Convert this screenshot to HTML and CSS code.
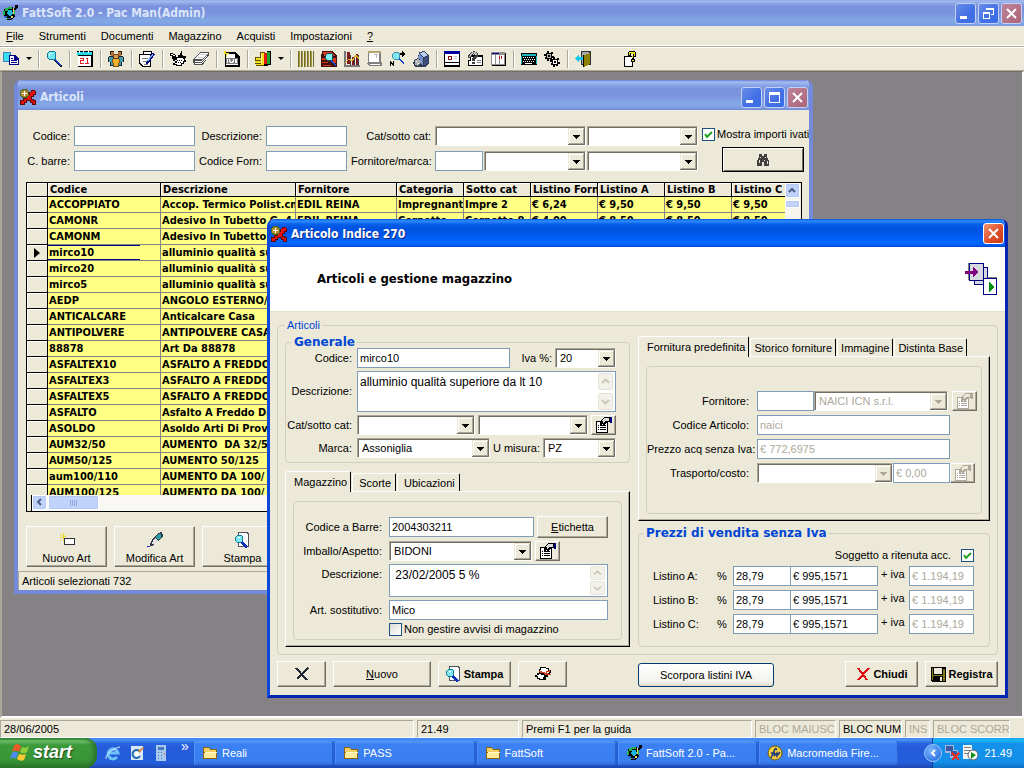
FILE: index.html
```html
<!DOCTYPE html>
<html lang="it">
<head>
    <meta charset="UTF-8">
    <meta name="viewport" content="width=device-width, initial-scale=1.0">
    <title>FattSoft 2.0 - Pac Man(Admin)</title>
    <link rel="stylesheet" href="styles.css">
</head>
<body>

    <!-- Icon set -->
    <svg class="sprite" aria-hidden="true">
        <symbol id="app" viewBox="0 0 16 16">
            <path fill="#000" d="M3 3h3V2h5v1h2V0h3v2l-3 4v5l-3 4H5l-3-3V5z"/>
            <path fill="#1fb24a" d="M3 3h3V2h4v2H6v2H3v4H1V6h2z"/>
            <path fill="#1db7dd" d="M6 5h4l1 3-3 3-3-2z"/>
            <path fill="#1c5fd0" d="M2 11h3v2h4v1H5l-3-2z"/>
            <path fill="#e8d860" d="M11 3h1v6h-1zM9 11h2v2H9z"/>
            <path fill="#1fb24a" d="M12 5h1v5h-1zM4 13h2v1H4z"/>
        </symbol>
        <symbol id="puzzle" viewBox="0 0 16 16">
            <path fill="#5a0808" d="M9 3h2V1h4v1h1v4h-2v2h-2v2h2v1h2v5h-4v-2h-2v-2H7v2H5v2H0v-5h3V9h3V6h3z"/>
            <path fill="#e81010" d="M10 3h2V2h3v3h-2v2h-2v4h2v1h2v3h-2v-2h-2v-2H6v2H4v2H1v-3h3v-2h3V6h3z"/>
            <path fill="#4c6b1e" d="M2 0h5v1h1v1h1v5H8v1H7v1H2V8H1V7H0V2h1V1h1z"/>
            <path fill="#b88a30" d="M3 1h3v1h2v5H6v1H3V7H1V2h2z"/>
            <path fill="#fff" d="M4 2h1v2h2v1H5v2H4V5H2V4h2z"/>
        </symbol>
        <symbol id="copy" viewBox="0 0 16 16">
            <path fill="#4a80c0" d="M0 1h8v10H0z"/><path fill="#38e0f0" d="M1 2h6v8H1z"/>
            <path fill="#000080" d="M6 4h6l4 4v6H6z"/><path fill="#fff" d="M7 5h4v4h4v4H7z"/>
            <path fill="#000080" d="M8 7h2v1H8zM8 9h6v1H8zM8 11h6v1H8z"/>
        </symbol>
        <symbol id="lens" viewBox="0 0 16 16">
            <path fill="#000" d="M9 8l7 6v2h-2L8 9z"/><path fill="#1848d8" d="M9 8l6 6-1 1-6-6z"/>
            <path fill="#107890" d="M3 0h5l2 2v5L8 9H3L1 7V2z"/>
            <path fill="#6fe9f7" d="M3 1h5l1 1v5L8 8H3L2 7V2z"/><path fill="#fff" d="M4 2h2v1H4v2H3V3h1z"/>
        </symbol>
        <symbol id="calendar" viewBox="0 0 16 16">
            <path fill="#000" d="M0 0h16v16H1V4H0z"/><path fill="#fff" d="M1 5h13v10H1z"/>
            <path fill="#20d8e8" d="M0 1h15v3H0z"/><path fill="#fff" d="M2 0h1v2H2zM6 0h1v2H6zM11 0h1v2h-1z"/>
            <path fill="#e02020" d="M3 7h4v3H4v2h3v1H3V9h3V8H3zM9 7h2v5h1v1H8v-1h2V8H9z"/>
        </symbol>
        <symbol id="people" viewBox="0 0 16 16">
            <path fill="#3a2008" d="M2 0h4v4H2zM10 0h4v4h-4z"/>
            <path fill="#b07038" d="M3 1h3v4H3zM10 1h3v4h-3z"/>
            <path fill="#182830" d="M1 5h6v6H6v4H2v-4H0V6h1zM9 5h6v1h1v5h-2v4h-4v-4H9z"/>
            <path fill="#4898b0" d="M1 6h4v5H1zM11 6h4v5h-4zM3 11h2v3H3zM11 11h2v3h-2z"/>
            <path fill="#6b3b10" d="M6 3h4v1h1v3h-1v1H6V7H5V4h1z"/><path fill="#d8a058" d="M6 4h4v3H6z"/>
            <path fill="#805008" d="M4 8h8v4h-1v4H5v-4H4z"/><path fill="#f0b030" d="M5 8h6v4h-1v3H6v-3H5z"/>
        </symbol>
        <symbol id="note" viewBox="0 0 16 16">
            <path fill="#000" d="M4 0h9v3H4zM0 3h12v13H3l-3-3z"/><path fill="#fff" d="M5 1h7v2H5zM1 4h10v11H4l-3-3z"/>
            <path fill="#808080" d="M3 7h6v1H3zM4 10h5v1H4zM5 13h4v1H5z"/>
            <path fill="#000080" d="M13 2l3 1-6 9-3 1 1-3z"/><path fill="#70b0f0" d="M13 3l1 1-5 7-1-1z"/>
        </symbol>
        <symbol id="pen" viewBox="0 0 16 16">
            <path fill="#000" d="M0 2h3v1h2v1h1v2h2V4h2V2h1V0h1v4h1v1h3v2h-1v2h1v2h-2v2h-2v2H6v-1H3v-2h2v-2H3V8H2V5H0z"/>
            <path fill="#fff" d="M1 3h2v1H1zM3 4h2v1H3zM7 7h6v1h1v2h-1v2h-2v2H7v-1H5v-1h2v-2H5V9h2z"/>
            <path fill="#000" d="M7 9h1v1H7zM9 9h1v1H9zM8 11h1v1H8zM10 11h1v1h-1zM11 9h1v1h-1z"/>
        </symbol>
        <symbol id="books" viewBox="0 0 16 16">
            <path fill="#505050" d="M7 1h9v3l-6 10H1l-1-5z"/><path fill="#fff" d="M7 2h8L9 8H2zM2 10h7l5-6v1l-5 6H2zM2 12h7l5-6v1l-5 6H2z"/>
            <path fill="#c8c8c8" d="M7 3h6v1H6zM5 6h5v1H5z"/>
        </symbol>
        <symbol id="iva" viewBox="0 0 16 16">
            <path fill="#000" d="M2 1h9l5 5v10H1V3z"/><path fill="#fff" d="M2 3h9v4h3v7H2z"/>
            <path fill="#808080" d="M2 7h12v6H2z"/><path fill="#e8e020" d="M0 0h2v2h3v1H3v3H2V3H0z"/>
            <path fill="#fff" d="M3 8h1v4H3zM5 8h1v2h1v1h1v-1h1V8h1v3H9v1H6v-1H5zM11 8h2v4h-2z"/>
        </symbol>
        <symbol id="coins" viewBox="0 0 16 16">
            <path fill="#605000" d="M5 1h5v14H1v-2H0V6h5z"/><path fill="#f0e020" d="M6 2h3v12H6zM1 7h5v2H1zM0 10h6v2H0zM1 13h6v1H1z"/>
            <path fill="#fff8a0" d="M6 3h1v9H6z"/><path fill="#e01818" d="M9 2h3v12H9z"/><path fill="#000" d="M12 0h4v14h-4zM9 13h4v2H9z"/>
            <path fill="#18a830" d="M12 1h3v12h-3z"/>
        </symbol>
        <symbol id="barcode" viewBox="0 0 16 16">
            <path fill="#a89a38" d="M0 0h16v16H0z"/><path fill="#6d6a30" d="M0 0h1v16H0zM3 0h1v16H3zM6 0h1v16H6zM9 0h1v16H9zM12 0h1v16h-1zM15 0h1v16h-1z"/>
            <path fill="#ece9d8" d="M2 0h1v16H2zM5 0h1v16H5zM8 0h1v16H8zM11 0h1v16h-1zM14 0h1v16h-1z"/>
        </symbol>
        <symbol id="archive" viewBox="0 0 16 16">
            <path fill="#401008" d="M1 0h11l4 5v11H0V6z"/><path fill="#d83818" d="M2 1h9l3 4H3zM1 7h4v2H1zM1 11h6v1H1zM12 7h3v5h-3zM2 14h8v1H2z"/>
            <path fill="#0c5a70" d="M6 2h4l2 2v4l-2 2H6L4 8V4z"/><path fill="#80f0f8" d="M6 3h4l1 1v4l-1 1H6L5 8V4z"/>
            <path fill="#1848d8" d="M10 9l5 5-1 1-5-5z"/>
        </symbol>
        <symbol id="chart" viewBox="0 0 16 16">
            <path fill="#777" d="M0 0h2v14h14v2H0z"/><path fill="#801820" d="M3 1h3v12H3zM8 6h2v8H8zM12 3h2v11h-2z"/>
            <path fill="#404040" d="M6 4h1v10H6zM10 6h1v8h-1zM14 4h1v10h-1z"/>
            <path fill="none" stroke="#d8b020" stroke-width="1" d="M1 12l4-4 3 2 4-6 3 4"/>
        </symbol>
        <symbol id="scroll" viewBox="0 0 16 16">
            <path fill="#b0a870" d="M1 0h13v2H1z"/><path fill="#808080" d="M1 2h13v9h1v4H2L0 12h1z"/>
            <path fill="#fff" d="M2 2h10v9H2zM3 13h10v1H3z"/><path fill="#c0c0c0" d="M7 3h4v1H7zM9 4h1v3H9z"/>
        </symbol>
        <symbol id="findnum" viewBox="0 0 16 16">
            <path fill="#4090a8" d="M4 1h4l2 2v4L8 9H4L2 7V3z"/><path fill="#80e8f4" d="M4 2h4l1 1v4L8 8H4L3 7V3z"/>
            <path fill="#1840d0" d="M9 7l5 5-1 1-5-5z"/><path fill="#000" d="M10 2h2V0l3 3-3 3V4h-2zM0 10h1l2 3v-3h1v5H3l-2-3v3H0z"/>
        </symbol>
        <symbol id="box3d" viewBox="0 0 16 16">
            <path fill="#303c58" d="M6 1l5-1 5 4v8l-4 4H2l-2-4 2-4 3-1z"/>
            <path fill="#b8d0f4" d="M6 2l5-1 4 3-4 2z"/><path fill="#7090c8" d="M6 3l4 3v8l-3-2V8H5z"/><path fill="#40507c" d="M11 7l4-2v7l-4 3z"/>
            <path fill="#b0b0b0" d="M2 9l3-1 3 3-3 4-3-1z"/><path fill="#fff" d="M3 10h1v1H3zM5 12h1v1H5z"/>
        </symbol>
        <symbol id="window" viewBox="0 0 16 16">
            <path fill="#000" d="M0 0h16v16H0z"/><path fill="#fff" d="M1 3h14v8H1zM1 12h14v2H1z"/><path fill="#0000a0" d="M0 0h16v3H0z"/>
            <path fill="#901010" d="M4 5h4v4H4z"/><path fill="#fff" d="M5 6h2v2H5z"/><path fill="#c0c0c0" d="M10 5h3v1h-3zM10 7h3v1h-3z"/>
        </symbol>
        <symbol id="help2" viewBox="0 0 16 16">
            <path fill="#000" d="M3 4h13v11H1V9h2z"/><path fill="#fff" d="M4 6h11v8H2v-4h2z"/>
            <path fill="#404040" d="M4 1l3-1 4 2v4L8 8v2H5V7l3-3-2-1-2 4H1V4zM5 11h3v2H5z"/>
            <path fill="#c0c0c0" d="M5 1h3l2 2-3 4H6l3-3-3-2-3 4H2z"/><path fill="#808080" d="M10 9h4v1h-4zM10 11h4v1h-4z"/>
        </symbol>
        <symbol id="columns" viewBox="0 0 16 16">
            <path fill="#000" d="M15 2h1v13H2v-1h13z"/><path fill="#909090" d="M1 1h14v13H1z"/><path fill="#fff" d="M2 4h3v9H2zM6 4h3v9H6zM10 4h4v9h-4z"/>
            <path fill="#000080" d="M2 2h7v1H2z"/><path fill="#b01818" d="M9 5h1v3H9zM11 5h1v3h-1z"/>
        </symbol>
        <symbol id="keyboard" viewBox="0 0 16 16">
            <path fill="#000" d="M0 2h16v12H0z"/><path fill="#20b8c0" d="M1 3h14v2H1zM0 5h1v8H0zM15 5h1v8h-1z"/>
            <path fill="#fff" d="M2 6h1v1H2zM4 6h1v1H4zM6 6h1v1H6zM8 6h1v1H8zM10 6h1v1h-1zM12 6h1v1h-1zM3 8h1v1H3zM5 8h1v1H5zM7 8h1v1H7zM9 8h1v1H9zM11 8h1v1h-1zM13 8h1v1h-1zM2 10h1v1H2zM4 10h1v1H4zM6 10h1v1H6zM8 10h1v1H8zM10 10h1v1h-1zM12 10h1v1h-1zM4 12h7v1H4z"/>
        </symbol>
        <symbol id="gears" viewBox="0 0 16 16">
            <path fill="#000" d="M3 0h2v2h2V1h2v2H8v2h2v2H8v2H6V8H5v2H3V8H1V6h1V5H0V3h2V2h1z"/><path fill="#b0b0b0" d="M3 3h4v4H3z"/><path fill="#000" d="M4 4h2v2H4z"/>
            <path fill="#000" d="M9 6h2v2h2V7h2v2h-1v2h2v2h-2v2h-2v-1h-1v2H9v-2H7v-2h1v-1H6V9h2V8h1z"/><path fill="#fff" d="M9 9h4v4H9z"/><path fill="#000" d="M10 10h2v2h-2z"/>
        </symbol>
        <symbol id="door" viewBox="0 0 16 16">
            <path fill="#303030" d="M6 0h10v14H6z"/><path fill="#a8a8a8" d="M7 1h7v12H7z"/><path fill="#908000" d="M9 4l6-2v11l-6 3z"/>
            <path fill="#10c8e8" d="M0 7l4-4v3h5v3H4v3z"/><path fill="#000" d="M8 4h1v12H8z"/>
        </symbol>
        <symbol id="question" viewBox="0 0 16 16">
            <path fill="#000" d="M1 5h9v11H1z"/><path fill="#fff" d="M2 6h7v9H2z"/><path fill="#000" d="M6 0h6v1h1v5h-2v2h1v3H8V8h1V5h1V3H8v2H5V1h1z"/>
            <path fill="#f0e818" d="M6 1h6v4h-2v2H9V5h2V3H8V2H7v2H6zM9 9h2v1H9z"/>
        </symbol>
        <symbol id="binoculars" viewBox="0 0 16 16">
            <path fill="#404040" d="M4 2h3v2h2V2h3v3l2 4v5H9v-4H7v4H2V9l2-4z"/>
            <path fill="#ece9d8" d="M5 5h1v1H5zM10 5h1v1h-1zM4 8h1v3H4zM9 8h1v1H9zM12 9h1v3h-1z"/>
        </symbol>
        <symbol id="newitem" viewBox="0 0 16 16">
            <path fill="#e8d820" d="M4 1h1v3h2V3h1v1H7v1H5v4H4V6H1V5h3zM1 2h1v1H1zM2 3h1v1H2zM1 8h1v1H1z"/>
            <path fill="#303040" d="M5 6h11v7H5z"/><path fill="#fff" d="M6 7h9v5H6z"/>
        </symbol>
        <symbol id="edit" viewBox="0 0 16 16">
            <path fill="#303848" d="M5 8l6-7 4-1 1 4-5 5-6 5H3v-2z"/><path fill="#28a0a0" d="M11 2h3v3l-3 3-3-3z"/>
            <path fill="#e0e0e0" d="M6 8l2-2 3 3-4 3H5z"/><path fill="#1030b8" d="M0 14h3v1H0z"/>
        </symbol>
        <symbol id="preview" viewBox="0 0 16 16">
            <path fill="#505060" d="M3 0h9l2 2v13H3z"/><path fill="#fff" d="M4 1h7l2 2v11H4z"/>
            <path fill="#108098" d="M2 3h4l2 2v4l-2 2H2L0 9V5z"/><path fill="#80e8f4" d="M2 4h4l1 1v4l-1 1H2L1 9V5z"/>
            <path fill="#1030b8" d="M7 9l6 5-1 2h-1l-6-5z"/><path fill="#fff" d="M3 5h2v1H3z"/>
        </symbol>
        <symbol id="props" viewBox="0 0 16 16">
            <path fill="#000" d="M0 4h12v12H0z"/><path fill="#fff" d="M1 5h10v10H1z"/>
            <path fill="#000" d="M2 8h1v1H2zM4 8h6v1H4zM2 10h1v1H2zM4 10h6v1H4zM2 12h1v1H2zM4 12h6v1H4zM4 4l4-4h6v5h-3L8 8H7V6L5 8H4z"/>
            <path fill="#ddd" d="M6 4l2-3h5v3h-3L7 6V4z"/><path fill="#000080" d="M14 0h2v6h-2z"/>
        </symbol>
        <symbol id="props-off" viewBox="0 0 16 16">
            <path fill="#aca899" d="M0 4h12v12H0z"/><path fill="#fff" d="M1 5h10v10H1z"/>
            <path fill="#aca899" d="M2 8h1v1H2zM4 8h6v1H4zM2 10h1v1H2zM4 10h6v1H4zM2 12h1v1H2zM4 12h6v1H4zM4 4l4-4h6v5h-3L8 8H7V6L5 8H4z"/>
            <path fill="#ece9d8" d="M6 4l2-3h5v3h-3L7 6V4z"/><path fill="#aca899" d="M14 0h2v6h-2z"/>
        </symbol>
        <symbol id="delete" viewBox="0 0 16 16">
            <path fill="none" stroke="#202838" stroke-width="2" d="M2 2l11 12M14 2L3 13"/>
        </symbol>
        <symbol id="redx" viewBox="0 0 16 16">
            <path fill="none" stroke="#e01010" stroke-width="2" d="M3 2l9 12M14 2L3 14"/>
        </symbol>
        <symbol id="floppy" viewBox="0 0 16 16">
            <path fill="#000" d="M1 1h15v15H2l-1-1z"/><path fill="#807818" d="M2 2h1v12H2zM13 3h2v12h-2zM3 9h10v1H3z"/>
            <path fill="#ece9d8" d="M4 2h8v6H4zM10 11h2v4h-2z"/>
        </symbol>
        <symbol id="eraser" viewBox="0 0 16 16">
            <path fill="#000" d="M5 1h6v1h3v2h2v3h-1v2h-2v2h-2v3H4v-1H2v-2H0V9h2V7h2V3h1z"/>
            <path fill="#fff" d="M6 2h5v1h2v2h1v2h-2v1h-2V7H7V6H5V4h1zM4 8h2v1h3v2H8v2H5v-1H3v-2H2V9h2z"/>
            <path fill="#e03818" d="M4 5h3v1h3v1h3v1h3v1h-4V8H9V7H5V6H4zM11 5h3V4h1v2h-3v3h-2V8h1z"/>
        </symbol>
        <symbol id="stock" viewBox="0 0 32 32">
            <path fill="#808080" d="M3 0h14v2H5v15H3zM18 14h14v2H20v16h-2z"/>
            <path fill="#000080" d="M9 4h14v18H9z"/><path fill="#d8d8e0" d="M10 5h12v16H10z"/>
            <path fill="#000080" d="M4 0h15v18H4z"/><path fill="#d8d8e0" d="M5 1h13v16H5z"/>
            <path fill="#800080" d="M0 8h8V4l6 5-6 5v-3H0z"/>
            <path fill="#000080" d="M18 15h14v17H18z"/><path fill="#fff" d="M19 16h12v15H19z"/><path fill="#009010" d="M24 19l5 5-5 5z"/>
        </symbol>
        <symbol id="folder" viewBox="0 0 16 16">
            <path fill="#8a6410" d="M1 2h5l2 2h7v10H1z"/><path fill="#f4d060" d="M2 3h4l2 2h6v2H2z"/><path fill="#ffec9a" d="M2 8h12v5H2z"/><path fill="#fff8d0" d="M3 7h12l-1 1H3z"/>
        </symbol>
        <symbol id="flag" viewBox="0 0 20 18">
            <path fill="#ef5b24" d="M4 3c3-3 4-2 7 0L9 9C7 7 5 7 2 9z"/><path fill="#8fcf3c" d="M12 4c3 1 4 1 7-1l-2 6c-3 2-5 1-7 0z"/>
            <path fill="#4b8df0" d="M2 10c3-2 4-1 6 0l-2 6c-2-2-4-1-6 0z"/><path fill="#fbca35" d="M9 11c3 1 5 1 7 0l-2 6c-3 1-4 1-7-1z"/>
        </symbol>
        <symbol id="ie" viewBox="0 0 16 16">
            <path fill="none" stroke="#6fc0fb" stroke-width="3" d="M12 12a5 5 0 1 1 1-4H4"/><path fill="none" stroke="#d8f0ff" stroke-width="1" d="M1 14C0 10 8 3 15 2"/>
        </symbol>
        <symbol id="desktop" viewBox="0 0 16 16">
            <path fill="#d8e8f8" d="M2 1h12v14H2z"/><path fill="none" stroke="#206cb0" stroke-width="2" d="M11 7a4 4 0 1 0 0 4"/><path fill="#fff" d="M6 7h4v4H6z"/><path fill="#e08830" d="M9 6l5-4 1 1-5 5z"/>
        </symbol>
        <symbol id="calc" viewBox="0 0 16 16">
            <path fill="#a8c8ee" d="M3 0h10v16H3z"/><path fill="#4878c0" d="M5 2h6v3H5zM5 7h1v1H5zM8 7h1v1H8zM5 10h1v1H5zM8 10h1v1H8zM5 13h1v1H5zM8 13h1v1H8z"/><path fill="#e87050" d="M11 8h1v2h-1z"/>
        </symbol>
        <symbol id="fireworks" viewBox="0 0 16 16">
            <circle cx="8" cy="8" r="7" fill="#f4d040" stroke="#705808"/><path fill="none" stroke="#203878" stroke-width="1.5" d="M4 13l4-9c1-1 2 0 1 1M4 8h4M8 8l-1 3 3-3v3l3-4"/>
        </symbol>
        <symbol id="network" viewBox="0 0 16 16">
            <path fill="#a8b8d8" d="M1 0h9v8H1zM6 5h8v8H6z"/><path fill="#3858a8" d="M2 1h7v5H2zM7 6h6v5H7z"/><path fill="none" stroke="#e83020" stroke-width="2" d="M8 8l7 7M15 8l-7 7"/>
        </symbol>
        <symbol id="server" viewBox="0 0 16 16">
            <path fill="#f4f4f4" d="M1 0h9v14H1z"/><path fill="#808080" d="M2 2h7v1H2zM2 5h7v1H2zM2 8h5v1H2z"/><circle cx="11" cy="10" r="5" fill="#fff" stroke="#606060"/><path fill="#109018" d="M9 7l5 3-5 4z"/>
        </symbol>
        <symbol id="w-min" viewBox="0 0 21 21"><path fill="#fff" d="M5 13h7v3H5z"/></symbol>
        <symbol id="w-max" viewBox="0 0 21 21"><path fill="#fff" d="M5 5h11v11H5zM6 8v7h9V8z" fill-rule="evenodd"/></symbol>
        <symbol id="w-restore" viewBox="0 0 21 21"><path fill="#fff" fill-rule="evenodd" d="M8 5h8v7h-3v-1h2V7H8zM5 9h7v7H5zM6 11v4h5v-4z"/></symbol>
        <symbol id="w-close" viewBox="0 0 21 21"><path fill="none" stroke="#fff" stroke-width="2" d="M6 6l9 9M15 6l-9 9"/></symbol>
    </svg>

    <!-- Main window -->
    <header class="titlebar main-title">
        <svg class="icon"><use href="#app"/></svg>
        <h1>FattSoft 2.0 - Pac Man(Admin)</h1>
        <button class="cap" aria-label="Riduci"><svg><use href="#w-min"/></svg></button>
        <button class="cap" aria-label="Ripristina"><svg><use href="#w-restore"/></svg></button>
        <button class="cap close" aria-label="Chiudi"><svg><use href="#w-close"/></svg></button>
    </header>

    <nav class="menubar">
        <button><u>F</u>ile</button>
        <button>Strumenti</button>
        <button>Documenti</button>
        <button>Magazzino</button>
        <button>Acquisti</button>
        <button>Impostazioni</button>
        <button><u>?</u></button>
    </nav>

    <div class="toolbar">
        <button aria-label="Copia"><svg class="icon"><use href="#copy"/></svg></button>
        <button class="drop" aria-label="Altro"></button>
        <i class="sep"></i>
        <button aria-label="Cerca"><svg class="icon"><use href="#lens"/></svg></button>
        <i class="sep"></i>
        <button aria-label="Calendario"><svg class="icon"><use href="#calendar"/></svg></button>
        <i class="sep"></i>
        <button aria-label="Clienti"><svg class="icon"><use href="#people"/></svg></button>
        <i class="sep"></i>
        <button aria-label="Documenti"><svg class="icon"><use href="#note"/></svg></button>
        <i class="sep"></i>
        <button aria-label="Prima nota"><svg class="icon"><use href="#pen"/></svg></button>
        <button aria-label="Registri"><svg class="icon"><use href="#books"/></svg></button>
        <i class="sep"></i>
        <button aria-label="Iva"><svg class="icon"><use href="#iva"/></svg></button>
        <i class="sep"></i>
        <button aria-label="Pagamenti"><svg class="icon"><use href="#coins"/></svg></button>
        <button class="drop" aria-label="Altro"></button>
        <i class="sep"></i>
        <button aria-label="Codici a barre"><svg class="icon"><use href="#barcode"/></svg></button>
        <button aria-label="Archivio"><svg class="icon"><use href="#archive"/></svg></button>
        <button aria-label="Statistiche"><svg class="icon"><use href="#chart"/></svg></button>
        <button aria-label="Listino"><svg class="icon"><use href="#scroll"/></svg></button>
        <button aria-label="Trova numero"><svg class="icon"><use href="#findnum"/></svg></button>
        <button aria-label="Magazzino"><svg class="icon"><use href="#box3d"/></svg></button>
        <i class="sep"></i>
        <button aria-label="Agenda"><svg class="icon"><use href="#window"/></svg></button>
        <button aria-label="Informazioni"><svg class="icon"><use href="#help2"/></svg></button>
        <button aria-label="Colonne"><svg class="icon"><use href="#columns"/></svg></button>
        <i class="sep"></i>
        <button aria-label="Tastiera"><svg class="icon"><use href="#keyboard"/></svg></button>
        <button aria-label="Opzioni"><svg class="icon"><use href="#gears"/></svg></button>
        <i class="sep"></i>
        <button aria-label="Esci"><svg class="icon"><use href="#door"/></svg></button>
        <button class="help" aria-label="Guida"><svg class="icon"><use href="#question"/></svg></button>
    </div>

    <main class="workspace">

        <!-- Article list -->
        <section class="window list-window">
            <div class="titlebar">
                <svg class="icon"><use href="#puzzle"/></svg>
                <h2>Articoli</h2>
                <button class="cap" aria-label="Riduci"><svg><use href="#w-min"/></svg></button>
                <button class="cap" aria-label="Ingrandisci"><svg><use href="#w-max"/></svg></button>
                <button class="cap close" aria-label="Chiudi"><svg><use href="#w-close"/></svg></button>
            </div>
            <div class="list-body">
                <form class="filters">
                    <label for="fCodice">Codice:</label>
                    <input type="text" id="fCodice">
                    <label for="fDescr">Descrizione:</label>
                    <input type="text" id="fDescr">
                    <label for="fCat">Cat/sotto cat:</label>
                    <div class="pair cats">
                        <select id="fCat"><option></option></select>
                        <select aria-label="Sotto categoria"><option></option></select>
                    </div>
                    <div class="filter-side">
                        <label class="check"><input type="checkbox" checked> Mostra importi ivati</label>
                        <button type="button" class="btn find" aria-label="Cerca"><svg class="icon"><use href="#binoculars"/></svg></button>
                    </div>
                    <label for="fBarre">C. barre:</label>
                    <input type="text" id="fBarre">
                    <label for="fForn">Codice Forn:</label>
                    <input type="text" id="fForn">
                    <label for="fMarca">Fornitore/marca:</label>
                    <div class="pair brand">
                        <input type="text" id="fMarca">
                        <select aria-label="Fornitore"><option></option></select>
                        <select aria-label="Marca"><option></option></select>
                    </div>
                </form>

                <div class="datagrid">
                    <div class="grid-view">
                        <table>
                            <colgroup>
                                <col class="c-mark"><col class="c-code"><col class="c-desc"><col class="c-forn">
                                <col class="c-num"><col class="c-num"><col class="c-num"><col class="c-num"><col class="c-num"><col>
                            </colgroup>
                            <thead>
                                <tr><th></th><th>Codice</th><th>Descrizione</th><th>Fornitore</th><th>Categoria</th><th>Sotto cat</th><th>Listino Forn</th><th>Listino A</th><th>Listino B</th><th>Listino C</th></tr>
                            </thead>
                            <tbody>
                                <tr><th></th><td>ACCOPPIATO</td><td>Accop. Termico Polist.cm</td><td>EDIL REINA</td><td>Impregnanti</td><td>Impre 2</td><td>€ 6,24</td><td>€ 9,50</td><td>€ 9,50</td><td>€ 9,50</td></tr>
                                <tr><th></th><td>CAMONR</td><td>Adesivo In Tubetto G. 4</td><td>EDIL REINA</td><td>Cornetto</td><td>Cornetto 8</td><td>€ 4,00</td><td>€ 8,50</td><td>€ 8,50</td><td>€ 8,50</td></tr>
                                <tr><th></th><td>CAMONM</td><td>Adesivo In Tubetto</td><td colspan="7"></td></tr>
                                <tr class="current"><th><span class="marker"></span></th><td>mirco10</td><td>alluminio qualità sup.</td><td colspan="7"></td></tr>
                                <tr><th></th><td>mirco20</td><td>alluminio qualità sup.</td><td colspan="7"></td></tr>
                                <tr><th></th><td>mirco5</td><td>alluminio qualità sup.</td><td colspan="7"></td></tr>
                                <tr><th></th><td>AEDP</td><td>ANGOLO ESTERNO/</td><td colspan="7"></td></tr>
                                <tr><th></th><td>ANTICALCARE</td><td>Anticalcare Casa</td><td colspan="7"></td></tr>
                                <tr><th></th><td>ANTIPOLVERE</td><td>ANTIPOLVERE CASA</td><td colspan="7"></td></tr>
                                <tr><th></th><td>88878</td><td>Art Da 88878</td><td colspan="7"></td></tr>
                                <tr><th></th><td>ASFALTEX10</td><td>ASFALTO A FREDDO</td><td colspan="7"></td></tr>
                                <tr><th></th><td>ASFALTEX3</td><td>ASFALTO A FREDDO</td><td colspan="7"></td></tr>
                                <tr><th></th><td>ASFALTEX5</td><td>ASFALTO A FREDDO</td><td colspan="7"></td></tr>
                                <tr><th></th><td>ASFALTO</td><td>Asfalto A Freddo Da</td><td colspan="7"></td></tr>
                                <tr><th></th><td>ASOLDO</td><td>Asoldo Arti Di Prova</td><td colspan="7"></td></tr>
                                <tr><th></th><td>AUM32/50</td><td>AUMENTO &nbsp;DA 32/50</td><td colspan="7"></td></tr>
                                <tr><th></th><td>AUM50/125</td><td>AUMENTO 50/125</td><td colspan="7"></td></tr>
                                <tr><th></th><td>aum100/110</td><td>AUMENTO DA 100/</td><td colspan="7"></td></tr>
                                <tr><th></th><td>AUM100/125</td><td>AUMENTO DA 100/</td><td colspan="7"></td></tr>
                            </tbody>
                        </table>
                        <div class="vscroll"><button class="sb" aria-label="Su"><svg viewBox="0 0 9 9"><path d="M1 6l3-3 3 3" fill="none" stroke="#4d6185" stroke-width="2"/></svg></button><span class="vthumb"></span></div>
                    </div>
                    <div class="hscroll"><button class="sb" aria-label="Sinistra"><svg viewBox="0 0 9 9"><path d="M6 1L3 4l3 3" fill="none" stroke="#4d6185" stroke-width="2"/></svg></button><span class="hthumb"></span></div>
                </div>

                <div class="list-actions">
                    <button class="btn"><svg class="icon"><use href="#newitem"/></svg>Nuovo Art</button>
                    <button class="btn"><svg class="icon"><use href="#edit"/></svg>Modifica Art</button>
                    <button class="btn"><svg class="icon"><use href="#preview"/></svg>Stampa</button>
                </div>
                <div class="list-status">Articoli selezionati 732</div>
            </div>
        </section>

        <!-- Article card -->
        <section class="window dialog">
            <div class="titlebar active">
                <svg class="icon"><use href="#puzzle"/></svg>
                <h2>Articolo Indice 270</h2>
                <button class="cap close" aria-label="Chiudi"><svg><use href="#w-close"/></svg></button>
            </div>
            <div class="banner">
                <h3>Articoli e gestione magazzino</h3>
                <svg><use href="#stock"/></svg>
            </div>
            <form class="dialog-body">
                <fieldset class="group articoli">
                    <legend>Articoli</legend>
                    <div class="columns">
                        <div class="col-left">
                            <fieldset class="group generale">
                                <legend class="big">Generale</legend>
                                <label for="codice">Codice:</label>
                                <div class="line">
                                    <input type="text" id="codice" class="w-code" value="mirco10" autofocus>
                                    <label for="iva-perc" class="push">Iva %:</label>
                                    <select id="iva-perc" class="w-iva"><option>20</option></select>
                                </div>
                                <label for="descr">Descrizione:</label>
                                <textarea id="descr" class="tall">alluminio qualità superiore da lt 10</textarea>
                                <label for="cat">Cat/sotto cat:</label>
                                <div class="line">
                                    <select id="cat" class="w-cat"><option></option></select>
                                    <select class="grow" aria-label="Sotto categoria"><option></option></select>
                                    <button type="button" class="btn mini" aria-label="Proprietà"><svg class="icon"><use href="#props"/></svg></button>
                                </div>
                                <label for="marca">Marca:</label>
                                <div class="line">
                                    <select id="marca" class="grow"><option>Assoniglia</option></select>
                                    <label for="misura">U misura:</label>
                                    <select id="misura" class="w-unit"><option>PZ</option></select>
                                </div>
                            </fieldset>

                            <div class="tabs">
                                <div class="tabstrip">
                                    <button type="button" class="tab on">Magazzino</button>
                                    <button type="button" class="tab">Scorte</button>
                                    <button type="button" class="tab">Ubicazioni</button>
                                </div>
                                <div class="panel">
                                    <div class="group store">
                                        <label for="barre">Codice a Barre:</label>
                                        <div class="line">
                                            <input type="text" id="barre" class="grow" value="2004303211">
                                            <button type="button" class="btn etichetta"><span><u>E</u>tichetta</span></button>
                                        </div>
                                        <label for="imballo">Imballo/Aspetto:</label>
                                        <div class="line">
                                            <select id="imballo" class="w-pack"><option>BIDONI</option></select>
                                            <button type="button" class="btn mini" aria-label="Proprietà"><svg class="icon"><use href="#props"/></svg></button>
                                        </div>
                                        <label for="descr2" class="up">Descrizione:</label>
                                        <textarea id="descr2" class="short"> 23/02/2005 5 %</textarea>
                                        <label for="sost">Art. sostitutivo:</label>
                                        <input type="text" id="sost" value="Mico">
                                        <label class="check no-alert"><input type="checkbox"> Non gestire avvisi di magazzino</label>
                                    </div>
                                </div>
                            </div>
                        </div>

                        <div class="col-right">
                            <div class="tabs">
                                <div class="tabstrip">
                                    <button type="button" class="tab on">Fornitura predefinita</button>
                                    <button type="button" class="tab">Storico forniture</button>
                                    <button type="button" class="tab">Immagine</button>
                                    <button type="button" class="tab">Distinta Base</button>
                                </div>
                                <div class="panel">
                                    <div class="group supply">
                                        <label for="forn">Fornitore:</label>
                                        <div class="line tight">
                                            <input type="text" id="forn" class="w-small" disabled>
                                            <select class="w-supplier" aria-label="Nome fornitore" disabled><option>NAICI ICN s.r.l.</option></select>
                                            <button type="button" class="btn mini spaced" aria-label="Proprietà" disabled><svg class="icon"><use href="#props-off"/></svg></button>
                                        </div>
                                        <label for="codart">Codice Articolo:</label>
                                        <input type="text" id="codart" class="w-long" value="naici" disabled>
                                        <label for="prezzo" class="close-label">Prezzo acq senza Iva:</label>
                                        <input type="text" id="prezzo" class="w-long" value="€ 772,6975" disabled>
                                        <label for="trasp">Trasporto/costo:</label>
                                        <div class="line tight">
                                            <select id="trasp" class="w-carrier" disabled><option></option></select>
                                            <input type="text" class="w-small" aria-label="Costo" value="€ 0,00" disabled>
                                            <button type="button" class="btn mini" aria-label="Proprietà" disabled><svg class="icon"><use href="#props-off"/></svg></button>
                                        </div>
                                    </div>
                                </div>
                            </div>

                            <fieldset class="group prezzi">
                                <legend class="big">Prezzi di vendita senza Iva</legend>
                                <label class="check ritenuta">Soggetto a ritenuta acc. <input type="checkbox" checked></label>
                                <div class="price">
                                    <label for="percA">Listino A:</label><span>%</span>
                                    <input type="text" id="percA" class="perc" value="28,79">
                                    <input type="text" class="net" aria-label="Prezzo A" value="€ 995,1571">
                                    <label for="ivaA" class="plus">+ iva</label>
                                    <input type="text" id="ivaA" value="€ 1.194,19" disabled>
                                </div>
                                <div class="price">
                                    <label for="percB">Listino B:</label><span>%</span>
                                    <input type="text" id="percB" class="perc" value="28,79">
                                    <input type="text" class="net" aria-label="Prezzo B" value="€ 995,1571">
                                    <label for="ivaB" class="plus">+ iva</label>
                                    <input type="text" id="ivaB" value="€ 1.194,19" disabled>
                                </div>
                                <div class="price">
                                    <label for="percC">Listino C:</label><span>%</span>
                                    <input type="text" id="percC" class="perc" value="28,79">
                                    <input type="text" class="net" aria-label="Prezzo C" value="€ 995,1571">
                                    <label for="ivaC" class="plus">+ iva</label>
                                    <input type="text" id="ivaC" value="€ 1.194,19" disabled>
                                </div>
                            </fieldset>
                        </div>
                    </div>
                </fieldset>

                <div class="dialog-actions">
                    <button type="button" class="btn b-small" aria-label="Elimina"><svg class="icon"><use href="#delete"/></svg></button>
                    <button type="button" class="btn b-wide"><span><u>N</u>uovo</span></button>
                    <button type="button" class="btn strong"><svg class="icon"><use href="#preview"/></svg>Stampa</button>
                    <button type="button" class="btn b-small" aria-label="Pulisci"><svg class="icon"><use href="#eraser"/></svg></button>
                    <button type="button" class="xp-btn">Scorpora listini IVA</button>
                    <button type="button" class="btn strong last"><svg class="icon"><use href="#redx"/></svg>Chiudi</button>
                    <button type="button" class="btn strong"><svg class="icon"><use href="#floppy"/></svg>Registra</button>
                </div>
            </form>
        </section>
    </main>

    <footer class="statusbar">
        <span class="s-date">28/06/2005</span>
        <span class="s-time">21.49</span>
        <span class="s-hint">Premi F1 per la guida</span>
        <span class="s-caps off">BLOC MAIUSC</span>
        <span class="s-num">BLOC NUM</span>
        <span class="s-ins off">INS</span>
        <span class="s-scroll off">BLOC SCORR</span>
    </footer>

    <!-- Taskbar -->
    <div class="taskbar">
        <button class="start"><svg><use href="#flag"/></svg>start</button>
        <div class="quick">
            <button aria-label="Internet"><svg class="icon smooth"><use href="#ie"/></svg></button>
            <button aria-label="Desktop"><svg class="icon smooth"><use href="#desktop"/></svg></button>
            <button aria-label="Calcolatrice"><svg class="icon"><use href="#calc"/></svg></button>
            <span class="more">»</span>
        </div>
        <div class="tasks">
            <button><svg class="icon"><use href="#folder"/></svg>Reali</button>
            <button><svg class="icon"><use href="#folder"/></svg>PASS</button>
            <button><svg class="icon"><use href="#folder"/></svg>FattSoft</button>
            <button><svg class="icon"><use href="#app"/></svg>FattSoft 2.0 - Pa...</button>
            <button><svg class="icon smooth"><use href="#fireworks"/></svg>Macromedia Fire...</button>
        </div>
        <div class="tray">
            <button class="expand" aria-label="Mostra icone nascoste"><svg viewBox="0 0 9 9"><path d="M6 1L3 4l3 3" fill="none" stroke="#fff" stroke-width="2"/></svg></button>
            <svg class="icon"><use href="#network"/></svg>
            <svg class="icon smooth"><use href="#server"/></svg>
            <time>21.49</time>
        </div>
    </div>

</body>
</html>
```
FILE: styles.css
```css
* {
    box-sizing: border-box;
}

body {
    margin: 0;
    min-height: 100vh;
    display: flex;
    flex-direction: column;
    background-color: #ece9d8;
    color: #000;
    font-family: "Liberation Sans", Arial, sans-serif;
    font-size: 11px;
    line-height: 13px;
    overflow: hidden;
}

h1, h2, h3 {
    margin: 0;
}

button, input, select, textarea {
    margin: 0;
    font: inherit;
    color: inherit;
    border-radius: 0;
    outline: none;
}

button {
    padding: 0;
    border: none;
    background: none;
    white-space: nowrap;
}

label {
    white-space: nowrap;
}

.sprite {
    position: absolute;
    width: 0;
    height: 0;
}

.icon {
    width: 16px;
    height: 16px;
    flex: none;
    shape-rendering: crispEdges;
}

.icon.smooth {
    shape-rendering: auto;
}

/* Title bars */
.titlebar {
    display: flex;
    align-items: center;
    gap: 2px;
    height: 30px;
    padding: 4px 1px 0 2px;
    background: linear-gradient(#6a7fd8 0, #a3bdf0 2px, #8aa6e8 5px, #7b91dd 9px, #7b93de 15px, #83a9e6 24px, #7d9ce0 28px, #7289da 30px);
    color: #dbe5f9;
}

.titlebar h1, .titlebar h2 {
    flex: 1;
    padding-left: 2px;
    font-family: "DejaVu Sans Condensed", "DejaVu Sans", sans-serif;
    font-size: 12px;
    line-height: 16px;
}

.main-title {
    height: 26px;
    padding: 0 2px 0 2px;
    background: linear-gradient(#8aa2e6 0, #a3bdf0 1px, #7b91dd 6px, #7b93de 13px, #83a9e6 21px, #7d9ce0 26px);
}

.titlebar.active {
    height: 28px;
    padding: 1px 1px 0 1px;
    background: linear-gradient(#0a4fd8 0, #2f8dfc 2px, #0a62ec 5px, #0053e1 9px, #0056e8 15px, #0066ff 23px, #0061fa 26px, #0040c8 28px);
    color: #fff;
    text-shadow: 1px 1px #0b2a86;
}

.cap {
    width: 21px;
    height: 21px;
    border: 1px solid #c3d2f4;
    border-radius: 3px;
    background: linear-gradient(135deg, #6a8cea, #4170e4 60%, #3a6ee8);
}

.cap svg {
    display: block;
    width: 21px;
    height: 21px;
    margin: -1px;
}

.cap.close {
    background: linear-gradient(135deg, #bd8399, #ae6478);
}

.active .cap.close {
    border-color: #fff;
    background: linear-gradient(135deg, #f0936f, #df4b25 60%, #c83c14);
}

/* Menu and toolbar */
.menubar {
    display: flex;
    gap: 15px;
    padding: 4px 6px 2px 6px;
    height: 20px;
    border-bottom: 1px solid #fff;
}

.menubar button {
    height: 13px;
}

.toolbar {
    display: flex;
    align-items: center;
    height: 25px;
    border-top: 1px solid #aca899;
    border-bottom: 1px solid #aca899;
    box-shadow: inset 0 1px #fff;
}

.toolbar button {
    width: 23px;
    height: 23px;
}

.toolbar .icon {
    display: block;
    margin: 0 auto 0 3px;
}

.toolbar .drop {
    width: 12px;
}

.drop::before {
    content: "";
    display: block;
    width: 0;
    margin: 0 auto;
    border: 3px solid transparent;
    border-top-color: #000;
    border-bottom: none;
}

.toolbar .help {
    margin-left: 25px;
}

.sep {
    width: 8px;
    height: 18px;
    background: linear-gradient(90deg, transparent 3px, #aca899 3px, #aca899 4px, #fff 4px, #fff 5px, transparent 5px);
}

.workspace {
    flex: 1;
    position: relative;
    background-color: #848284;
    border: 2px solid;
    border-color: #716f64 #fff #fff #716f64;
    border-left-color: #aca899;
    border-top-width: 1px;
}

/* Controls */
input[type="text"], textarea {
    display: block;
    width: 100%;
    min-width: 0;
    height: 20px;
    padding: 0 2px;
    border: 1px solid #7f9db9;
    background-color: #fff;
}

textarea {
    padding: 4px 2px;
    resize: none;
    overflow: hidden;
    font-size: 12px;
    background-repeat: no-repeat;
    background-position: right 2px top 1px, right 2px bottom 1px;
    background-image:
        url("data:image/svg+xml,%3Csvg xmlns='http://www.w3.org/2000/svg' width='15' height='17'%3E%3Crect x='.5' y='.5' width='14' height='16' rx='2' fill='%23f3f2ea' stroke='%23e4e2d6'/%3E%3Cpath d='M4 10l3.500-3.500L11 10' fill='none' stroke='%23c9c7ba' stroke-width='2'/%3E%3C/svg%3E"),
        url("data:image/svg+xml,%3Csvg xmlns='http://www.w3.org/2000/svg' width='15' height='17'%3E%3Crect x='.5' y='.5' width='14' height='16' rx='2' fill='%23f3f2ea' stroke='%23e4e2d6'/%3E%3Cpath d='M4 7l3.500 3.500L11 7' fill='none' stroke='%23c9c7ba' stroke-width='2'/%3E%3C/svg%3E");
}

textarea.tall {
    height: 41px;
}

textarea.short {
    height: 33px;
    background-size: 15px 14px;
    white-space: pre;
}

select {
    appearance: none;
    width: 100%;
    min-width: 0;
    height: 20px;
    padding: 0 18px 0 4px;
    border: 1px solid;
    border-color: #aca899 #fff #fff #aca899;
    box-shadow: inset 1px 1px #716f64;
    background: #fff url("data:image/svg+xml,%3Csvg xmlns='http://www.w3.org/2000/svg' width='17' height='17' shape-rendering='crispEdges'%3E%3Cpath fill='%23ece9d8' d='M0 0h17v17H0z'/%3E%3Cpath fill='%23fff' d='M1 1h14v1H2v13H1z'/%3E%3Cpath fill='%23716f64' d='M16 0h1v17H0v-1h16z'/%3E%3Cpath fill='%23aca899' d='M15 1h1v15H1v-1h14z'/%3E%3Cpath d='M5 7h7v1h-1v1h-1v1H9v1H8v-1H7V9H6V8H5z'/%3E%3C/svg%3E") no-repeat right 0 top 1px;
}

input:disabled, select:disabled {
    color: #aca899;
    opacity: 1;
    background-color: #fff;
}

select:disabled {
    background-image: url("data:image/svg+xml,%3Csvg xmlns='http://www.w3.org/2000/svg' width='17' height='17' shape-rendering='crispEdges'%3E%3Cpath fill='%23ece9d8' d='M0 0h17v17H0z'/%3E%3Cpath fill='%23fff' d='M1 1h14v1H2v13H1z'/%3E%3Cpath fill='%23716f64' d='M16 0h1v17H0v-1h16z'/%3E%3Cpath fill='%23aca899' d='M15 1h1v15H1v-1h14zM5 7h7v1h-1v1h-1v1H9v1H8v-1H7V9H6V8H5z'/%3E%3C/svg%3E");
}

input[type="checkbox"] {
    appearance: none;
    flex: none;
    width: 13px;
    height: 13px;
    border: 1px solid #1c5180;
    background: linear-gradient(135deg, #dcdcd7, #fff);
}

input[type="checkbox"]:checked {
    background: #fff url("data:image/svg+xml,%3Csvg xmlns='http://www.w3.org/2000/svg' width='11' height='11'%3E%3Cpath d='M2 5l2 3 5-5' fill='none' stroke='%2321a121' stroke-width='2'/%3E%3C/svg%3E");
}

.check {
    display: flex;
    align-items: center;
    gap: 2px;
}

.btn {
    display: flex;
    align-items: center;
    justify-content: center;
    border: 1px solid;
    border-color: #fff #716f64 #716f64 #fff;
    box-shadow: inset -1px -1px #aca899;
    background-color: #ece9d8;
}

.btn.mini {
    flex: none;
    width: 25px;
    height: 20px;
}

.btn.spaced {
    margin-left: 4px;
}

/* Article list window */
.window {
    position: absolute;
    background-color: #ece9d8;
    border-radius: 7px 7px 0 0;
    overflow: hidden;
}

.list-window {
    left: 12px;
    top: 8px;
    width: 799px;
    border: 4px solid #7589da;
    border-top: none;
}

.list-body {
    padding-top: 16px;
}

.filters {
    display: grid;
    grid-template-columns: 52px 121px 63px 81px 80px 1fr 107px;
    gap: 4px;
    align-items: start;
}

.filters > label {
    padding-top: 4px;
    text-align: right;
}

.pair {
    display: grid;
    gap: 1px;
}

.cats {
    grid-template-columns: 151px 1fr;
}

.brand {
    grid-template-columns: 48px 102px 1fr;
}

.filter-side {
    grid-row: span 2;
    grid-column: 7;
    padding-top: 2px;
}

.find {
    width: 82px;
    height: 25px;
    margin: 6px 0 0 20px;
    border-color: #000;
    box-shadow: inset 1px 1px #fff, inset -1px -1px #716f64;
}

.datagrid {
    margin: 10px 7px 14px 8px;
    border: 1px solid #000;
    background-color: #ece9d8;
}

.grid-view {
    display: flex;
    height: 312px;
    overflow: hidden;
}

.datagrid table {
    flex: 1;
    width: 0;
    table-layout: fixed;
    border-spacing: 0;
    font-family: "DejaVu Sans Condensed", "DejaVu Sans", sans-serif;
    font-weight: bold;
}

.c-mark { width: 21px; }
.c-code { width: 113px; }
.c-desc { width: 135px; }
.c-forn { width: 101px; }
.c-num { width: 67px; }

.datagrid th, .datagrid td {
    height: 16px;
    padding: 0 0 0 1px;
    line-height: 15px;
    text-align: left;
    white-space: nowrap;
    overflow: hidden;
    border-right: 1px solid #848284;
    border-bottom: 1px solid #848284;
}

.datagrid td {
    background-color: #ffff84;
}

.datagrid th {
    border-color: #000;
    box-shadow: inset 1px 1px #fff;
}

.datagrid thead th {
    height: 14px;
    padding: 1px 0 0 2px;
    line-height: 12px;
}

.datagrid th:last-child, .datagrid td:last-child {
    border-right: none;
}

.current td:nth-child(2) {
    background: linear-gradient(#000080, #000080) 0 0 / 92px 1px no-repeat, linear-gradient(#000080, #000080) 0 100% / 92px 1px no-repeat, #ffff84;
}

.marker {
    display: block;
    width: 0;
    margin-left: 6px;
    border: 5px solid transparent;
    border-left: 6px solid #000;
    border-right: none;
}

.vscroll {
    width: 15px;
    margin-right: 1px;
    background-color: #f6f5f0;
}

.sb, .vthumb, .hthumb {
    display: block;
    border: 1px solid #fff;
    border-radius: 2px;
    background-color: #c1d2fb;
    box-shadow: inset 0 0 0 1px #b4c8f6;
}

.sb {
    width: 15px;
    height: 15px;
    line-height: 0;
}

.sb svg {
    width: 9px;
    height: 9px;
}

.vthumb {
    height: 8px;
    margin-top: 2px;
}

.hscroll {
    display: flex;
    gap: 1px;
    height: 16px;
    margin-left: 4px;
    border-left: 1px solid #000;
    background-color: #f9f8f4;
}

.hthumb {
    width: 51px;
    height: 15px;
    background: repeating-linear-gradient(90deg, #8fa8e0 0, #8fa8e0 1px, transparent 1px, transparent 2px) center / 8px 6px no-repeat, #c1d2fb;
}

.list-actions {
    display: flex;
    gap: 7px;
    padding: 0 8px 4px;
}

.list-actions .btn {
    flex-direction: column;
    gap: 4px;
    width: 81px;
    height: 41px;
    padding-top: 4px;
}

.list-status {
    height: 19px;
    padding: 3px;
    border-top: 1px solid #aca899;
    border-left: 1px solid #aca899;
}

/* Article dialog */
.dialog {
    left: 265px;
    top: 147px;
    width: 741px;
    border: 3px solid #0a48dc;
    border-top: none;
    border-right-color: #0226b0;
    border-bottom-color: #0226b0;
}

.banner {
    display: flex;
    align-items: center;
    justify-content: space-between;
    height: 65px;
    padding: 0 8px 0 47px;
    background-color: #fff;
    border-bottom: 1px solid #e4e0cc;
}

.banner h3 {
    font-family: "DejaVu Sans Condensed", "DejaVu Sans", sans-serif;
    font-size: 13px;
    line-height: 16px;
}

.banner svg {
    width: 32px;
    height: 32px;
    shape-rendering: crispEdges;
}

.dialog-body {
    padding: 6px 7px 8px;
}

.group {
    min-width: 0;
    margin: 0;
    border: 1px solid #d0d0bf;
    border-radius: 4px;
}

legend {
    padding: 0 2px;
    color: #0046d5;
    line-height: 14px;
}

legend.big {
    font-family: "DejaVu Sans", sans-serif;
    font-size: 12px;
    font-weight: bold;
    line-height: 12px;
    height: 12px;
}

.articoli {
    padding: 3px 7px 7px;
}

.columns {
    display: grid;
    grid-template-columns: 345fr 352fr;
    gap: 8px;
}

.generale {
    display: grid;
    grid-template-columns: 66px 1fr;
    gap: 3px 5px;
    align-items: center;
    margin-top: 1px;
    padding: 0 13px 4px 0;
}

.generale legend {
    margin-left: 6px;
}

.generale > label, .store > label, .supply > label {
    text-align: right;
}

.line {
    display: flex;
    align-items: center;
    gap: 3px;
}

.line.tight {
    gap: 0;
}

.line > * {
    flex: none;
}

.line > .grow {
    flex: 1;
    width: 0;
}

.line > .w-code { width: 153px; }
.line > .w-iva { width: 61px; }
.line > .w-cat { width: 118px; }
.line > .w-unit { width: 73px; }
.line > .w-pack { width: 143px; }
.line > .w-small { width: 57px; }
.line > .w-supplier { width: 134px; }
.line > .w-carrier { width: 136px; }
.supply > .w-long { width: 193px; }

.push {
    margin-left: auto;
}

.col-left .tabs {
    margin-top: 7px;
}

.tabstrip {
    display: flex;
    align-items: flex-end;
    height: 21px;
}

.tab {
    height: 18px;
    margin-right: 1px;
    padding: 2px 3px 0 3px;
    border: 1px solid;
    border-color: #fff #000 transparent #fff;
    border-bottom: none;
    border-radius: 3px 2px 0 0;
}

.tab.on {
    height: 21px;
    margin-bottom: -1px;
    padding: 0 3px 0 8px;
    background-color: #ece9d8;
}

.col-left .tab:not(.on) {
    padding: 2px 4px 0 6px;
}

.panel {
    padding: 9px 7px 6px;
    border: 1px solid;
    border-color: #fff #000 #000 #fff;
    box-shadow: inset -1px -1px #aca899;
}

.store {
    display: grid;
    grid-template-columns: 88px 1fr;
    gap: 3px 7px;
    align-items: center;
    padding: 14px 13px 3px 0;
}

.etichetta {
    width: 71px;
    height: 22px;
}

.store .up {
    align-self: start;
    padding-top: 4px;
}

.no-alert {
    grid-column: 2;
}

.supply {
    display: grid;
    grid-template-columns: 110px 1fr;
    row-gap: 4px;
    align-items: center;
    padding: 24px 0 30px;
}

.supply > label {
    padding-right: 8px;
}

.supply > .close-label {
    padding-right: 2px;
}

.prezzi {
    display: flex;
    flex-direction: column;
    gap: 4px;
    margin-top: 6px;
    padding: 10px 15px 12px 14px;
}

.prezzi legend {
    margin-left: -9px;
}

.ritenuta {
    justify-content: flex-end;
    gap: 10px;
}

.price {
    display: grid;
    grid-template-columns: 64px 16px 57px 88px 31px 1fr;
    align-items: center;
}

.price .perc {
    border-right: none;
}

.plus {
    padding: 0 0 4px 3px;
}

.dialog-actions {
    display: flex;
    gap: 7px;
    padding-top: 6px;
}

.dialog-actions .btn {
    height: 26px;
}

.b-small {
    width: 49px;
}

.b-wide {
    width: 98px;
}

.strong {
    gap: 2px;
    width: 73px;
    font-weight: bold;
}

.xp-btn {
    width: 136px;
    height: 24px;
    margin: 2px 0 0 64px;
    border: 1px solid #003c74;
    border-radius: 3px;
    background: linear-gradient(#fff, #f3f2ec 80%, #dcd8cc);
}

.last {
    margin-left: auto;
}

/* Status bar */
.statusbar {
    display: flex;
    gap: 3px;
    padding: 2px 14px 0 0;
    height: 20px;
    white-space: nowrap;
}

.statusbar span {
    flex: none;
    padding: 2px 0 0 3px;
    border: 1px solid;
    border-color: #aca899 #fff #fff #aca899;
}

.statusbar .off {
    color: #aca899;
}

.statusbar .s-date { flex: 1; }
.s-time { width: 102px; }
.s-hint { width: 230px; }
.s-caps { width: 81px; }
.s-num { width: 63px; }
.s-ins { width: 25px; }
.s-scroll { width: 77px; }

/* Taskbar */
.taskbar {
    display: flex;
    align-items: stretch;
    height: 30px;
    background: linear-gradient(#3a80ee 0, #4a92f4 2px, #2a66e0 5px, #245bdb 10px, #245edb 25px, #1c46b0 30px);
    color: #fff;
}

.start {
    display: flex;
    align-items: center;
    gap: 3px;
    width: 97px;
    padding: 0 0 2px 10px;
    border-radius: 0 12px 12px 0;
    background: linear-gradient(#2f8a2f 0, #6fc06a 3px, #3d9a3b 7px, #389638 22px, #2a7428 30px);
    box-shadow: inset -3px 0 4px #2a6e28;
    font-size: 18px;
    font-style: italic;
    font-weight: bold;
    text-shadow: 1px 1px 1px #1f4a1d;
}

.start svg {
    width: 20px;
    height: 18px;
}

.quick {
    display: flex;
    align-items: center;
    gap: 8px;
    width: 97px;
    padding-left: 8px;
}

.quick .icon {
    display: block;
}

.more {
    align-self: flex-start;
    padding: 2px 0 0 4px;
    font-size: 14px;
}

.tasks {
    flex: 1;
    display: grid;
    grid-template-columns: repeat(5, 1fr);
    gap: 2px;
    padding: 3px 34px 3px 0;
}

.tasks button {
    display: flex;
    align-items: center;
    gap: 4px;
    padding-left: 8px;
    border-radius: 2px;
    background: linear-gradient(#5a9bfb 0, #3c81f3 3px, #3a7ff2 20px, #3069d8);
    box-shadow: inset 1px 0 #4f91f8, inset -1px 0 #2c62cc;
}

.tray {
    display: flex;
    align-items: center;
    gap: 2px;
    padding-right: 12px;
    border-left: 1px solid #0b3a98;
    background: linear-gradient(#1b9cf0 0, #19b9f3 2px, #1390ea 6px, #128fe8 24px, #0f6fc4 30px);
}

.tray time {
    padding-left: 4px;
}

.expand {
    width: 18px;
    height: 18px;
    margin-left: -9px;
    border: 1px solid #9cc8fa;
    border-radius: 50%;
    background: radial-gradient(circle at 6px 5px, #7ab6ff, #1a5fd8);
    line-height: 0;
}

.expand svg {
    width: 9px;
    height: 9px;
}
```
